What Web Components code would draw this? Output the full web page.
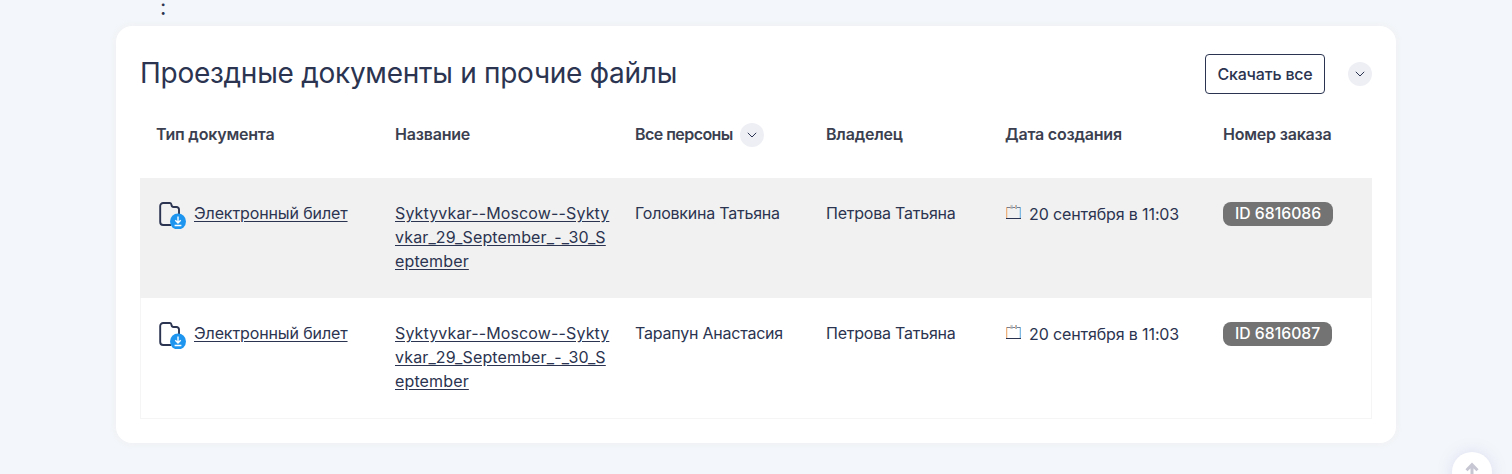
<!DOCTYPE html>
<html lang="ru"><head><meta charset="utf-8"><style>
html,body{margin:0;padding:0;height:474px;overflow:hidden;background:#f3f6fa}
body{font-family:Inter,"Noto Sans",sans-serif;color:#2b3450}
</style></head><body>
<docs-page>
  <docs-card title="Проездные документы и прочие файлы">
    <doc-row slot="rows" head></doc-row>
    <doc-row slot="rows" shade person="Головкина Татьяна" order="ID 6816086"></doc-row>
    <doc-row slot="rows" person="Тарапун Анастасия" order="ID 6816087"></doc-row>
  </docs-card>
</docs-page>
<script>
const chev=`<svg width="10" height="6" viewBox="0 0 10 6" fill="none"><path d="M.8.8 5 5l4.2-4.2" stroke="#2b3450" stroke-width="1"/></svg>`;
customElements.define('round-chevron',class extends HTMLElement{constructor(){super();this.attachShadow({mode:'open'}).innerHTML=`<style>:host{display:inline-flex;width:24px;height:24px;border-radius:50%;background:#eeeff5;align-items:center;justify-content:center;flex:none}svg{display:block}</style>${chev}`}});
customElements.define('docs-page',class extends HTMLElement{constructor(){super();this.attachShadow({mode:'open'}).innerHTML=`<style>
:host{display:block;position:relative;height:474px;overflow:hidden}
.colon{height:26px;padding-left:160px;font-size:22px;line-height:14px;color:#2b3450;box-sizing:border-box}
.wrap{padding:0 116px}
.top{position:absolute;left:1452px;top:452px;width:40px;height:40px;border-radius:50%;background:#fff;box-shadow:0 0 16px rgba(120,120,200,.18);display:flex;justify-content:center;padding-top:10px;box-sizing:border-box}
</style><div class="colon">:</div><div class="wrap"><slot></slot></div>
<div class="top"><svg width="16" height="16" viewBox="0 0 16 16" fill="none"><path d="M8 16V3M2.500 8.200 8 2.700 13.500 8.200" stroke="#c6c7d3" stroke-width="3"/></svg></div>`}});
customElements.define('docs-card',class extends HTMLElement{constructor(){super();const t=this.getAttribute('title');this.removeAttribute('title');this.attachShadow({mode:'open'}).innerHTML=`<style>
:host{display:block;background:#fff;border-radius:16px;padding:24px;height:417px;box-sizing:border-box;box-shadow:0 0 6px rgba(238,238,238,.9)}
.h{display:flex;align-items:center;height:48px}
h2{margin:0;font-size:28px;line-height:46px;height:48px;font-weight:400;flex:1;color:#2b3450;white-space:nowrap;letter-spacing:-.27px}
button{font:500 16px/38px Inter,sans-serif;letter-spacing:-.18px;color:#2b3450;background:#fff;border:1px solid #2b3450;border-radius:4px;width:120px;height:40px;padding:0;margin-right:23px}
</style><div class="h"><h2>${t}</h2><button>Скачать все</button><round-chevron></round-chevron></div><div><slot name="rows"></slot></div>`}});
const COLS='239px 240px 191px 179px 218px 165px';
const fileIcon=`<svg width="28" height="28" viewBox="0 0 28 28" fill="none"><path d="M12 2H5.200A3 3 0 0 0 2.200 5v16a3 3 0 0 0 3 3H13M12 2c1 0 1.300.8 1.500 2s.8 2 2 2h3A2.500 2.500 0 0 1 21 8.500V13" stroke="#2b3450" stroke-width="1.900"/><circle cx="20" cy="20.500" r="8" fill="#1e96f0"/><path d="M20 15.500v6.200M17.300 19.200 20 21.900l2.700-2.700M16.600 24.500h6.800" stroke="#fff" stroke-width="1.400"/></svg>`;
const cal=`<svg width="16" height="16" viewBox="0 0 16 16"><rect x="1" y="3" width="1.300" height="11.500" fill="#eeb27e"/><rect x="14.700" y="3" width="1.300" height="11.500" fill="#7db8e2"/><rect x="1" y="14" width="15" height="1" fill="#2b3450"/><rect x="2" y="3" width="13" height=".8" fill="#5a6178"/><rect x="5.500" y="1" width="1" height="4" fill="#e8b58a"/><rect x="6.500" y="1" width="1" height="4" fill="#8db6d6"/><rect x="10" y="1" width="1" height="4" fill="#e8b58a"/><rect x="11" y="1" width="1" height="4" fill="#8db6d6"/></svg>`;
customElements.define('doc-row',class extends HTMLElement{constructor(){super();const s=this.attachShadow({mode:'open'});const base=`:host{display:grid;grid-template-columns:${COLS};box-sizing:border-box}
.c{padding-left:16px;box-sizing:border-box;min-width:0}`;
if(this.hasAttribute('head')){s.innerHTML=`<style>${base}
:host{height:80px;padding-top:24px;font-size:16px;letter-spacing:-.2px;font-weight:600;line-height:24px;color:#3b3f50}
.c{display:flex;align-items:center;height:24px;gap:8px}
.ps{gap:7px}.ps span{letter-spacing:-.55px}
round-chevron{margin-top:2px}</style>
<div class="c">Тип документа</div><div class="c">Название</div><div class="c ps"><span>Все персоны</span><round-chevron></round-chevron></div><div class="c">Владелец</div><div class="c">Дата создания</div><div class="c">Номер заказа</div>`;return}
const shade=this.hasAttribute('shade');
const bg=shade?'background:#f1f1f1;height:120px;':'height:121px;box-shadow:inset 1px 0 #f5f5f5,inset -1px 0 #f5f5f5,inset 0 -1px #f5f5f5;';
s.innerHTML=`<style>${base}
:host{${bg}padding-top:23px;font-size:16px;letter-spacing:-.12px;line-height:24px;color:#2b3450}
a{color:inherit;text-decoration:underline;text-underline-offset:2px}
.t{display:flex;gap:7px;padding-left:18px}.t svg{flex:none}
.t a{margin-left:1px;align-self:flex-start}
.n{word-break:break-all;padding-right:8px;letter-spacing:.14px}
.p{letter-spacing:-.22px}
.d{display:flex;gap:8px;padding-left:16px}.d svg{margin-top:3px;flex:none}
.d span{display:block;margin-top:1px}
.id{display:inline-block;background:#737373;color:#fff;border-radius:8px;font-weight:500;font-size:15.750px;letter-spacing:0;line-height:24px;padding:0 12px}
</style>
<div class="c t">${fileIcon}<a href="#">Электронный билет</a></div>
<div class="c n"><a href="#">Syktyvkar--Moscow--Syktyvkar_29_September_-_30_September</a></div>
<div class="c p">${this.getAttribute('person')}</div>
<div class="c p">Петрова Татьяна</div>
<div class="c d">${cal}<span>20 сентября в 11:03</span></div>
<div class="c"><span class="id">${this.getAttribute('order')}</span></div>`}});
</script></body></html>
